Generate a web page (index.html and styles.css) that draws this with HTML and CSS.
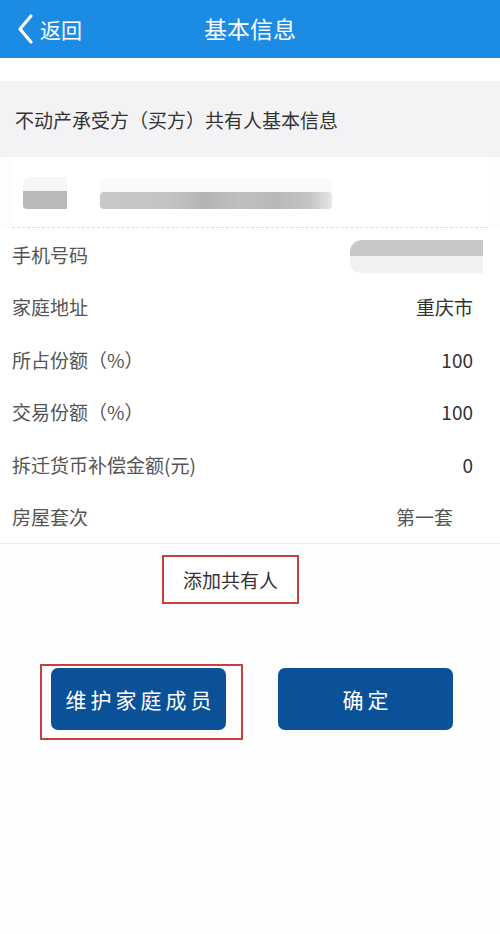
FILE: index.html
```html
<!DOCTYPE html>
<html lang="zh">
<head>
<meta charset="utf-8">
<link rel="stylesheet" href="styles.css">
</head>
<body>
<div class="app">
  <header class="nav">
    <div class="back">
      <svg class="chev" width="18" height="32" viewBox="0 0 18 32"><path d="M15 3 L4 16 L15 29" fill="none" stroke="#fff" stroke-width="3.2" stroke-linecap="round" stroke-linejoin="round"/></svg>
      <span>返回</span>
    </div>
    <div class="title">基本信息</div>
  </header>
  <div class="spacer"></div>
  <div class="section">不动产承受方（买方）共有人基本信息</div>
  <div class="name-row">
    <div class="blur blur-a"></div>
    <div class="blur blur-b"></div>
  </div>
  <div class="rows">
    <div class="row"><span class="label">手机号码</span><span class="blur blur-phone"></span></div>
    <div class="row"><span class="label">家庭地址</span><span class="value">重庆市</span></div>
    <div class="row"><span class="label">所占份额（%）</span><span class="value">100</span></div>
    <div class="row"><span class="label">交易份额（%）</span><span class="value">100</span></div>
    <div class="row"><span class="label">拆迁货币补偿金额(元)</span><span class="value">0</span></div>
    <div class="row"><span class="label">房屋套次</span><span class="value value-indent">第一套</span></div>
  </div>
  <div class="add-wrap">
    <div class="add">添加共有人</div>
  </div>
  <div class="actions">
    <div class="mark">
      <div class="btn">维护家庭成员</div>
    </div>
    <div class="btn btn-ok">确定</div>
  </div>
</div>
</body>
</html>
```
FILE: styles.css
```css
html, body {
  margin: 0;
  padding: 0;
  background: #fff;
}
.app {
  width: 500px;
  height: 934px;
  overflow: hidden;
  font-family: "Noto Sans CJK SC", "Noto Sans", sans-serif;
  background: #fdfdfd;
}
.nav {
  height: 58px;
  background: #1b8be4;
  color: #fff;
  display: flex;
  align-items: center;
  position: relative;
}
.back {
  display: flex;
  align-items: center;
  padding-left: 16px;
  gap: 6px;
  font-size: 21px;
}
.chev { display: block; }
.title {
  position: absolute;
  left: 0;
  right: 0;
  top: 0;
  height: 58px;
  line-height: 56px;
  text-align: center;
  font-size: 23px;
  pointer-events: none;
}
.spacer {
  height: 23px;
  background: #fff;
}
.section {
  height: 76px;
  background: #f3f3f5;
  display: flex;
  align-items: center;
  padding-left: 15px;
  font-size: 19px;
  color: #333;
}
.name-row {
  height: 70px;
  margin: 0 12px;
  border-bottom: 1px dashed #dcdcdc;
  background: #fff;
  position: relative;
}
.blur {
  position: absolute;
  display: block;
  border-radius: 4px;
}
.blur-a {
  left: 11px;
  top: 20px;
  width: 44px;
  height: 32px;
  background: linear-gradient(to bottom, #f6f6f6 0 45%, #b9b9bb 45% 100%);
  border-radius: 8px 0 0 4px;
}
.blur-b {
  left: 88px;
  top: 35px;
  width: 232px;
  height: 17px;
  background: linear-gradient(to right, #c8c8ca 0%, #c4c4c6 30%, #b4b4b6 45%, #c0c0c2 60%, #b8b8ba 75%, #c4c4c6 90%, #e6e6e8 100%);
  box-shadow: 0 -14px 0 #fafafa;
}
.rows {
  background: #fff;
  border-bottom: 1px solid #ececec;
}
.row {
  height: 52.5px;
  display: flex;
  align-items: center;
  justify-content: space-between;
  padding: 0 27px 0 12px;
  position: relative;
  font-size: 19px;
}
.label { color: #555; }
.value { color: #333; }
.value-indent { margin-right: 20px; color: #555; }
.blur-phone {
  right: 17px;
  top: 12px;
  width: 133px;
  height: 33px;
  background: linear-gradient(to bottom, #c8c8ca 0 50%, #f1f1f3 50% 100%);
  border-radius: 12px 0 0 10px;
}
.add-wrap {
  display: flex;
  padding: 11px 0 0 162px;
}
.add {
  width: 133px;
  height: 45px;
  border: 2px solid #c5403f;
  display: flex;
  align-items: center;
  justify-content: center;
  font-size: 19px;
  color: #333;
  background: #fff;
}
.actions {
  display: flex;
  align-items: flex-start;
  padding: 60px 0 0 40px;
  gap: 35px;
}
.mark {
  border: 2px solid #c5403f;
  padding: 2px 15px 8px 9px;
}
.btn {
  width: 175px;
  height: 62px;
  border-radius: 7px;
  background: #0b5198;
  color: #fff;
  font-size: 21px;
  letter-spacing: 4px;
  display: flex;
  align-items: center;
  justify-content: center;
  padding-left: 4px;
  box-sizing: border-box;
}
.btn-ok {
  margin-top: 4px;
}
```
